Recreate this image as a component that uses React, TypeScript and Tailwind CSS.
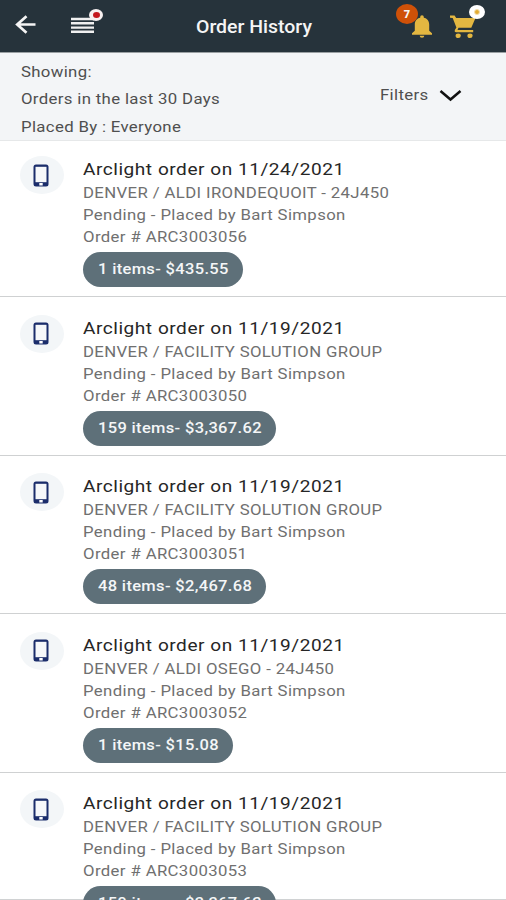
const orders = [
  { date: "11/24/2021", site: "DENVER / ALDI IRONDEQUOIT - 24J450", id: "ARC3003056", summary: "1 items- $435.55", pill: "w-[160px]" },
  { date: "11/19/2021", site: "DENVER / FACILITY SOLUTION GROUP", id: "ARC3003050", summary: "159 items- $3,367.62", pill: "w-[193px]" },
  { date: "11/19/2021", site: "DENVER / FACILITY SOLUTION GROUP", id: "ARC3003051", summary: "48 items- $2,467.68", pill: "w-[183px]" },
  { date: "11/19/2021", site: "DENVER / ALDI OSEGO - 24J450", id: "ARC3003052", summary: "1 items- $15.08", pill: "w-[150px]" },
  { date: "11/19/2021", site: "DENVER / FACILITY SOLUTION GROUP", id: "ARC3003053", summary: "159 items- $3,367.62", pill: "w-[193px]" },
];

function Header() {
  return (
    <header className="flex h-[52px] shrink-0 items-start bg-[#26333b] text-[#f5f5f5]">
      <svg className="ml-[15px] mt-[15px] h-[19px] w-[21px]" viewBox="0 0 21 19" fill="none" stroke="#f5f5f5" strokeWidth="2.700">
        <path d="M20.500 9.500H2M11.500 1.200L2.200 9.500L11.500 17.800" />
      </svg>
      <div className="relative ml-[35px] mt-[17px] h-4 w-[23px]">
        <svg className="h-4 w-[23px]" viewBox="0 0 23 16" fill="none" stroke="#f0f0f0" strokeWidth="2.400">
          <path d="M0 2H23M0 6.300H23M0 10.600H23M0 14.800H23" />
        </svg>
        <span className="absolute -top-[8px] left-[18px] flex h-3 w-[14px] items-center justify-center rounded-[50%] bg-[#f7f0f0]">
          <span className="h-[6px] w-[7px] rounded-[50%] bg-[#c4161c]" />
        </span>
      </div>
      <h1 className="ml-[102px] mt-[13px] w-[116px] origin-left scale-x-[1.025] whitespace-nowrap text-[19px] leading-7 font-medium">
        Order History
      </h1>
      <div className="relative ml-[99px] mt-[15px] h-[23px] w-[22px]">
        <svg className="h-[23px] w-[22px]" viewBox="0 0 22 23" fill="#e3b741">
          <path d="M1 19.800V18.200L3.800 15.800V9.500C3.800 5.900 5.900 3.500 9.200 2.800V2A1.800 1.800 0 0 1 12.800 2V2.800C16.100 3.500 18.200 5.900 18.200 9.500V15.800L21 18.200V19.800ZM8.700 20.700H13.300A2.300 2.100 0 0 1 8.700 20.700Z" />
        </svg>
        <span className="absolute -left-[15px] -top-[11px] flex h-[20px] w-[22px] items-center justify-center rounded-[50%] bg-[#cf5108] text-[11px] leading-none font-black">
          7
        </span>
      </div>
      <div className="relative ml-[17px] mt-[15px] h-6 w-7">
        <svg className="h-6 w-7" viewBox="0 0 28 24" fill="#e3b741">
          <path d="M0 0.500H4.600L6.200 3H25.500L21.300 12.800H8.500L7.500 15H23.200V17.200H6.200C4.700 17.200 4.300 16 5 14.800L6.400 12.400L2.700 3L0 2.700Z" />
          <ellipse cx="8.200" cy="20.700" rx="2.600" ry="2.300" />
          <ellipse cx="20" cy="20.700" rx="2.600" ry="2.300" />
        </svg>
        <span className="absolute -top-[10px] left-[19px] flex h-[14px] w-4 items-center justify-center rounded-[50%] bg-white">
          <span className="size-[6px] rounded-full border border-[#f3dfb0] bg-[#e3ac33]" />
        </span>
      </div>
    </header>
  );
}

function FilterBar() {
  return (
    <section className="flex h-[89px] shrink-0 justify-between border-t border-b border-t-[#9aa0a3] border-b-[#e6e8e9] bg-[#f3f5f7] pl-[20.500px] text-[#4f4f4f]">
      <div className="pt-[5.500px] text-[15px] leading-[27.500px] whitespace-nowrap">
        <p className="origin-left scale-x-[1.118] tracking-[0.300px]">Showing:</p>
        <p className="origin-left scale-x-[1.118] tracking-[0.300px]">Orders in the last 30 Days</p>
        <p className="origin-left scale-x-[1.118] tracking-[0.300px]">Placed By : Everyone</p>
      </div>
      <button className="mr-[44px] mt-[29.500px] flex h-6 w-[82px] items-center justify-between">
        <span className="origin-left scale-x-[1.118] text-[15px] leading-6 tracking-[0.300px]">Filters</span>
        <svg className="mt-[3px] h-3 w-[23px]" viewBox="0 0 23 12" fill="none" stroke="#111" strokeWidth="2.500">
          <path d="M1.500 1L11.500 9.500L21.500 1" />
        </svg>
      </button>
    </section>
  );
}

function PhoneIcon() {
  return (
    <div className="mt-[15px] flex h-[38px] w-11 shrink-0 items-center justify-center rounded-[50%] bg-[#f3f6f8]">
      <svg className="mr-[2px] h-[23px] w-4" viewBox="0 0 16 23">
        <rect x="0.500" y="0.500" width="15" height="22" rx="2.500" fill="#1b2d6b" />
        <path d="M2.500 2.800H13.500V18.200H2.500Z" fill="#f6f8fa" />
        <path d="M6.300 19H9.700V21.500H6.300Z" fill="#fff" />
      </svg>
    </div>
  );
}

export default function App() {
  return (
    <main className="flex h-[900px] w-[506px] flex-col overflow-hidden bg-[linear-gradient(to_top,#d0d2d3_1px,white_1px)] font-[Roboto,sans-serif]">
      <Header />
      <FilterBar />
      <ul>
        {orders.map((order) => (
          <li key={order.id} className="flex h-[158.500px] items-start pl-5">
            <PhoneIcon />
            <div className="flex w-0 grow flex-col pl-[19px] pt-[15px] whitespace-nowrap text-[#707070]">
              <h2 className="origin-left scale-x-[1.120] text-[17px] leading-[26px] tracking-[0.480px] text-[#262626]">
                Arclight order on {order.date}
              </h2>
              <div className="origin-left scale-x-[1.115] text-[15px] leading-[22px] tracking-[0.340px]">
                <p>{order.site}</p>
                <p>Pending - Placed by Bart Simpson</p>
                <p>Order # {order.id}</p>
              </div>
              <div className={`mt-[4px] flex h-[35px] shrink-0 items-center rounded-full bg-[#5e7079] pl-[15px] text-[15px] font-medium text-[#f4f6f7] ${order.pill}`}>
                <span className="origin-left scale-x-[1.100] tracking-[0.300px]">{order.summary}</span>
              </div>
              <div className="-ml-[83px] mt-[9px] h-px w-[506px] bg-[#cfd1d2]" />
            </div>
          </li>
        ))}
      </ul>
    </main>
  );
}
